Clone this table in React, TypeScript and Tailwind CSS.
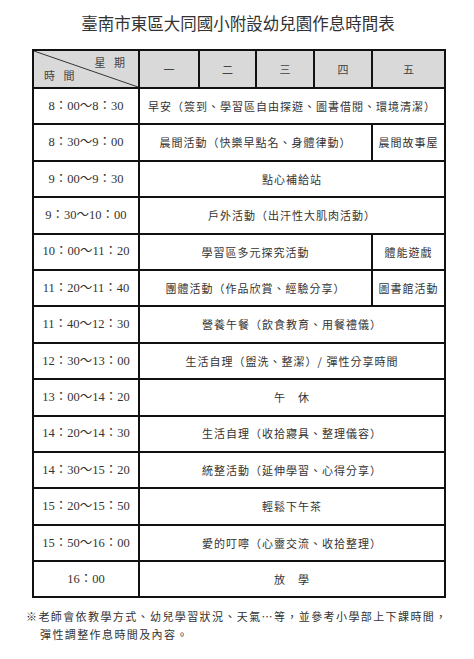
import React from "react";

type Row = {
  time: string;
  main: string;
  side?: string;
};

const ROWS: Row[] = [
  { time: "8：00～8：30", main: "早安（簽到、學習區自由探遊、圖書借閱、環境清潔）" },
  { time: "8：30～9：00", main: "晨間活動（快樂早點名、身體律動）", side: "晨間故事屋" },
  { time: "9：00～9：30", main: "點心補給站" },
  { time: "9：30～10：00", main: "戶外活動（出汗性大肌肉活動）" },
  { time: "10：00～11：20", main: "學習區多元探究活動", side: "體能遊戲" },
  { time: "11：20～11：40", main: "團體活動（作品欣賞、經驗分享）", side: "圖書館活動" },
  { time: "11：40～12：30", main: "營養午餐（飲食教育、用餐禮儀）" },
  { time: "12：30～13：00", main: "生活自理（盥洗、整潔）/ 彈性分享時間" },
  { time: "13：00～14：20", main: "午　休" },
  { time: "14：20～14：30", main: "生活自理（收拾寢具、整理儀容）" },
  { time: "14：30～15：20", main: "統整活動（延伸學習、心得分享）" },
  { time: "15：20～15：50", main: "輕鬆下午茶" },
  { time: "15：50～16：00", main: "愛的叮嚀（心靈交流、收拾整理）" },
  { time: "16：00", main: "放　學" },
];

const DAYS = ["一", "二", "三", "四", "五"];

const cjk = "font-['Noto_Sans_CJK_TC','Noto_Sans_CJK_SC',sans-serif]";
const timeFont = "font-['Liberation_Serif','Noto_Sans_CJK_TC',serif]";

export default function App() {
  return (
    <div className={`w-[474px] h-[659px] bg-white text-[#333] ${cjk}`}>
      {/* Title */}
      <h1 className="pt-[11px] h-[49px] text-center text-[16.5px] leading-[24px] font-normal text-[#333] pl-[2px]">
        臺南市東區大同國小附設幼兒園作息時間表
      </h1>

      {/* Schedule table */}
      <table className="ml-[32px] w-[412px] table-fixed border-collapse border-2 border-[#111]">
        <colgroup>
          <col className="w-[106px]" />
          <col className="w-[60px]" />
          <col className="w-[57px]" />
          <col className="w-[58px]" />
          <col className="w-[58px]" />
          <col className="w-[73px]" />
        </colgroup>
        <thead>
          <tr className="h-[38px] bg-[#d9d9d9]">
            <th className="relative border-2 border-[#111] p-0 font-normal">
              <svg className="absolute inset-0 w-full h-full" viewBox="0 0 100 100" preserveAspectRatio="none">
                <line x1="0" y1="0" x2="100" y2="100" stroke="#333" strokeWidth="1" vectorEffect="non-scaling-stroke" />
              </svg>
              <div className="relative flex flex-col text-[11px] leading-[13px] tracking-[3px] text-[#444]">
                <span className="self-end pr-[10px]">星 期</span>
                <span className="self-start pl-[10px]">時 間</span>
              </div>
            </th>
            {DAYS.map((d) => (
              <th key={d} className="border-2 border-[#111] p-0 text-[11px] font-normal text-[#444]">
                {d}
              </th>
            ))}
          </tr>
        </thead>
        <tbody>
          {ROWS.map((r) => (
            <tr key={r.time} className="h-[36.4px]">
              <td className={`border-2 border-[#111] p-0 text-center text-[12.5px] text-[#333] ${timeFont}`}>
                {r.time}
              </td>
              <td
                colSpan={r.side ? 4 : 5}
                className="border-2 border-[#111] p-0 text-center text-[11px] tracking-[1px] text-[#333]"
              >
                {r.main}
              </td>
              {r.side && (
                <td className="border-2 border-[#111] p-0 text-center text-[11px] tracking-[1px] text-[#333]">
                  {r.side}
                </td>
              )}
            </tr>
          ))}
        </tbody>
      </table>

      {/* Footnote */}
      <div className="mt-[9px] pl-[26px] text-[11px] leading-[18px] tracking-[1.4px] text-[#333]">
        <p>※老師會依教學方式、幼兒學習狀況、天氣…等，並參考小學部上下課時間，</p>
        <p className="pl-[14px]">彈性調整作息時間及內容。</p>
      </div>
    </div>
  );
}
